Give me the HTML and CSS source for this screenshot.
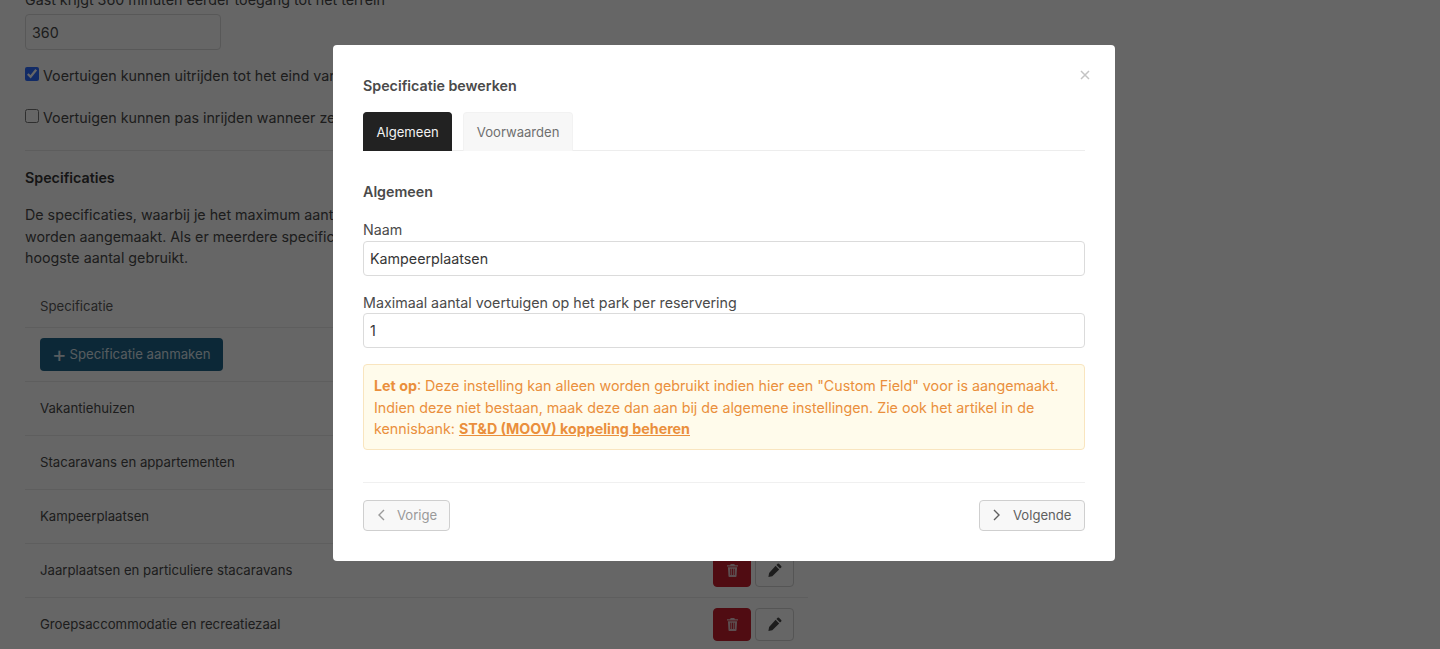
FILE: index.html
```html
<!DOCTYPE html>
<html lang="nl">
<head>
<meta charset="utf-8">
<title>Specificatie bewerken</title>
<link rel="stylesheet" href="styles.css">
</head>
<body>
<main class="page">
  <p class="hint">Gast krijgt 360 minuten eerder toegang tot het terrein</p>
  <input class="page-input" type="text" value="360" readonly>
  <label class="check check-first"><input type="checkbox" checked class="box"> Voertuigen kunnen uitrijden tot het eind van de dag</label>
  <label class="check check-second"><input type="checkbox" class="box"> Voertuigen kunnen pas inrijden wanneer ze de reservering hebben</label>
  <hr class="page-rule">
  <h2 class="section-title">Specificaties</h2>
  <p class="section-text">De specificaties, waarbij je het maximum aantal voertuigen per reservering aangeeft, kunnen hier<br>worden aangemaakt. Als er meerdere specificaties van toepassing zijn wordt het<br>hoogste aantal gebruikt.</p>
  <div class="table">
    <div class="row row-head">Specificatie</div>
    <div class="row"><button class="add-btn"><span class="plus">+</span><span>Specificatie aanmaken</span></button></div>
    <div class="row">Vakantiehuizen</div>
    <div class="row">Stacaravans en appartementen</div>
    <div class="row">Kampeerplaatsen</div>
    <div class="row"><span>Jaarplaatsen en particuliere stacaravans</span>
      <span class="actions">
        <button class="icon-btn danger"><svg width="11" height="13" viewBox="0 0 12 14"><path fill="currentColor" d="M4 0h4l.6 1.2H12v1.4H0V1.2h3.4zM1 3.4h10l-.6 9.6a1 1 0 0 1-1 1H2.600a1 1 0 0 1-1-1zM3.600 5v7h1V5zm1.900 0v7h1V5zm1.900 0v7h1V5z"/></svg></button>
        <button class="icon-btn"><svg width="14" height="14" viewBox="0 0 14 14"><path fill="currentColor" d="M9.600.8a1 1 0 0 1 1.400 0l2.200 2.200a1 1 0 0 1 0 1.400L12 5.600 8.400 2zM7.600 2.800l3.600 3.600-6.900 6.900L.4 14l.7-3.900z"/></svg></button>
      </span>
    </div>
    <div class="row"><span>Groepsaccommodatie en recreatiezaal</span>
      <span class="actions">
        <button class="icon-btn danger"><svg width="11" height="13" viewBox="0 0 12 14"><path fill="currentColor" d="M4 0h4l.6 1.2H12v1.4H0V1.2h3.4zM1 3.4h10l-.6 9.6a1 1 0 0 1-1 1H2.600a1 1 0 0 1-1-1zM3.600 5v7h1V5zm1.900 0v7h1V5zm1.900 0v7h1V5z"/></svg></button>
        <button class="icon-btn"><svg width="14" height="14" viewBox="0 0 14 14"><path fill="currentColor" d="M9.600.8a1 1 0 0 1 1.400 0l2.200 2.200a1 1 0 0 1 0 1.400L12 5.600 8.400 2zM7.600 2.800l3.600 3.600-6.900 6.900L.4 14l.7-3.900z"/></svg></button>
      </span>
    </div>
  </div>
</main>

<div class="backdrop">
  <section class="modal">
    <button class="close" aria-label="Sluiten"><svg width="10" height="10" viewBox="0 0 10 10"><path d="M1 1l8 8M9 1l-8 8" stroke="currentColor" stroke-width="1.500" fill="none"/></svg></button>
    <h1 class="modal-title">Specificatie bewerken</h1>
    <nav class="tabs">
      <a class="tab tab-active">Algemeen</a>
      <a class="tab">Voorwaarden</a>
    </nav>
    <h2 class="form-title">Algemeen</h2>
    <label class="field-label">Naam</label>
    <input class="field" type="text" value="Kampeerplaatsen" readonly>
    <label class="field-label field-label-second">Maximaal aantal voertuigen op het park per reservering</label>
    <input class="field" type="text" value="1" readonly>
    <div class="alert"><strong>Let op</strong>: Deze instelling kan alleen worden gebruikt indien hier een "Custom Field" voor is aangemaakt. Indien deze niet bestaan, maak deze dan aan bij de algemene instellingen. Zie ook het artikel in de kennisbank: <a class="alert-link">ST&amp;D (MOOV) koppeling beheren</a></div>
    <footer class="modal-footer">
      <button class="nav-btn nav-prev"><svg class="chevron" width="8" height="12" viewBox="0 0 8 12"><path d="M7 1L2 6l5 5" stroke="currentColor" stroke-width="1.400" fill="none"/></svg><span>Vorige</span></button>
      <button class="nav-btn nav-next"><svg class="chevron" width="8" height="12" viewBox="0 0 8 12"><path d="M1 1l5 5-5 5" stroke="currentColor" stroke-width="1.400" fill="none"/></svg><span>Volgende</span></button>
    </footer>
  </section>
</div>
</body>
</html>
```
FILE: styles.css
```css
* { box-sizing: border-box; }
html, body { margin: 0; height: 649px; overflow: hidden; }
body { font-family: Inter, "Liberation Sans", sans-serif; font-size: 14.27px; color: #4a4a4a; background: #fff; }
button { font-family: inherit; }

.page { width: 808px; padding: 0 0 0 25px; margin-top: -11px; }
.hint { margin: 0; line-height: 22px; height: 22px; }
.page-input { display: block; width: 196px; height: 36px; margin-top: 3px; padding: 0 6px; border: 1px solid #dbdbdb; border-radius: 4px; font: inherit; color: #4a4a4a; background: #fff; }
.check { display: flex; align-items: center; gap: 4px; height: 22px; white-space: nowrap; }
.check-first { margin-top: 14px; }
.check-second { margin-top: 20px; }
.box { margin: 0; width: 14px; height: 14px; accent-color: #2f6cff; position: relative; top: -1px; }
.page-rule { border: 0; border-top: 1px solid #e8e8e8; margin: 22px 0 0; }
.section-title { margin: 17px 0 0; font-size: 14.27px; line-height: 20px; font-weight: 600; color: #363636; }
.section-text { margin: 16px 0 0; line-height: 21.500px; white-space: nowrap; }
.table { margin-top: 16.500px; font-size: 13.2px; }
.row { height: 54px; display: flex; align-items: center; justify-content: space-between; padding: 0 14px 1px 15px; border-bottom: 1px solid #ebebeb; }
.row-head { height: 43px; padding-bottom: 0; color: #5b5b5b; }
.add-btn { height: 33px; width: 183px; display: flex; align-items: center; gap: 3px; border: 0; border-radius: 4px; background: #206489; color: #d9e6ee; font-size: 13.2px; padding: 0 0 0 12px; }
.plus { font-size: 22px; line-height: 1; }
.actions { display: flex; gap: 4px; }
.icon-btn { width: 39px; height: 33px; display: flex; align-items: center; justify-content: center; border: 1px solid #d4d4d4; border-radius: 4px; background: #fff; color: #4a4a4a; padding: 0; }
.danger { width: 38px; background: #c8202f; border-color: #c8202f; color: #e6c4c7; }

.backdrop { position: fixed; inset: 0; background: rgba(0,0,0,.6); }
.modal { position: absolute; left: 333px; top: 45px; width: 782px; height: 516px; padding: 31px 30px 0; background: #fff; border-radius: 4px; }
.close { position: absolute; right: 25px; top: 25px; width: 10px; height: 10px; padding: 0; border: 0; background: none; color: #c4c4c4; display: flex; }
.modal-title { margin: 0; font-size: 14.27px; line-height: 20px; font-weight: 600; color: #4a4a4a; }
.tabs { display: flex; gap: 11px; margin-top: 16px; border-bottom: 1px solid #ededed; height: 39px; }
.tab { height: 39px; padding: 0 12.500px; line-height: 39px; font-size: 13.1px; border-radius: 4px 4px 0 0; background: #f7f7f7; color: #6f6f6f; border: 1px solid #f2f2f2; border-bottom: 0; }
.tab-active { background: #222; border-color: #222; color: #f2f2f2; }
.form-title { margin: 31px 0 0; font-size: 14.27px; line-height: 20px; font-weight: 600; color: #4a4a4a; }
.field-label { display: block; margin-top: 17px; line-height: 22px; color: #4a4a4a; }
.field-label-second { margin-top: 16px; line-height: 21px; }
.field { display: block; width: 722px; height: 35px; padding: 0 6px; border: 1px solid #dbdbdb; border-radius: 4px; font: inherit; color: #363636; background: #fff; }
.alert { margin-top: 16px; height: 86px; padding: 10px; line-height: 21.500px; background: #fffbeb; border: 1px solid #f9e5bf; border-radius: 4px; color: #ea8f3c; }
.alert strong { font-weight: 700; }
.alert-link { font-weight: 700; text-decoration: underline; }
.modal-footer { display: flex; justify-content: space-between; align-items: center; margin-top: 32px; padding-top: 17px; border-top: 1px solid #f0f0f0; }
.nav-btn { height: 31px; display: flex; align-items: center; gap: 12px; padding: 0 13px 2px; border: 1px solid #cfcfcf; border-radius: 4px; background: #f8f8f8; font-size: 13.1px; }
.chevron { flex: none; }
.nav-prev { color: #9a9a9a; width: 87px; }
.nav-next { color: #5f5f5f; width: 106px; }
```
